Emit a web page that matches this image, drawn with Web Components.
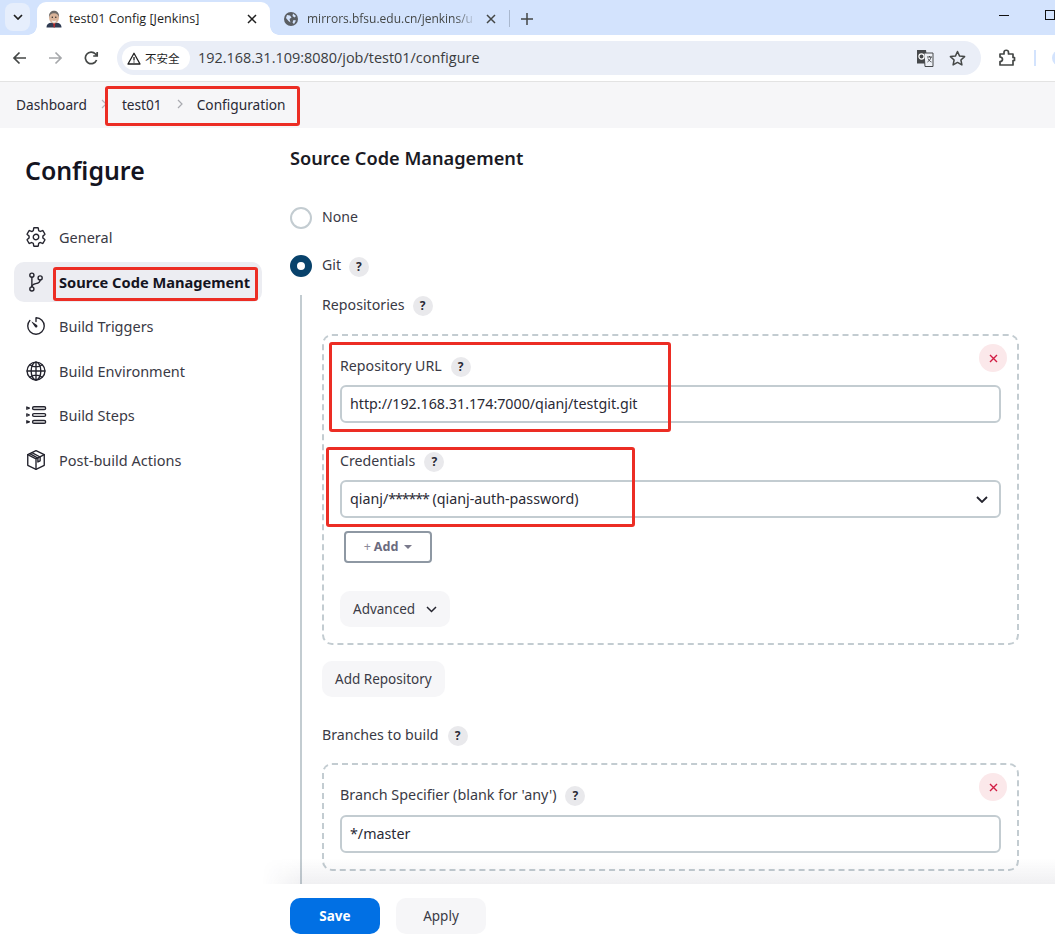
<!DOCTYPE html>
<html lang="en"><head><meta charset="utf-8"><title>test01 Config [Jenkins]</title>
<style>
html,body{margin:0;padding:0;height:944px;overflow:hidden;background:#fff}
body{position:relative;font-family:"Noto Sans","Noto Sans CJK SC",sans-serif;color:#2a2a35;font-size:14px;display:flex;flex-direction:column}
</style></head><body>
<x-tabstrip></x-tabstrip>
<x-toolbar></x-toolbar>
<x-crumbs></x-crumbs>
<x-page>
  <x-sidebar slot="side"></x-sidebar>
  <x-radio>None</x-radio>
  <x-radio checked style="margin-top:24px">Git<x-help></x-help></x-radio>
  <x-nest>
    <x-label style="gap:8px">Repositories</x-label>
    <x-box style="margin-top:19px">
      <x-label>Repository URL</x-label>
      <x-input style="margin-top:9px">http://192.168.31.174:7000/qianj/testgit.git</x-input>
      <x-label style="margin-top:28px">Credentials</x-label>
      <x-input select style="margin-top:9px">qianj/<span style="letter-spacing:-1.100px">******</span> (qianj-auth-password)</x-input>
      <x-addbtn></x-addbtn>
      <x-btn chevron style="margin-top:28px">Advanced</x-btn>
    </x-box>
    <x-btn style="margin-top:16px">Add Repository</x-btn>
    <x-label style="margin-top:28px">Branches to build</x-label>
    <x-box style="margin-top:18px">
      <x-label style="font-size:14.350px">Branch Specifier (blank for 'any')</x-label>
      <x-input style="margin-top:10px">*/master</x-input>
    </x-box>
  </x-nest>
</x-page>
<x-savebar></x-savebar>
<x-mark style="left:105px;top:86px;width:195px;height:40px"></x-mark>
<x-mark style="left:53px;top:267px;width:205px;height:34px"></x-mark>
<x-mark style="left:329px;top:342px;width:342px;height:90px"></x-mark>
<x-mark style="left:326px;top:447px;width:309px;height:80px"></x-mark>
<script>
function def(name, html, init){
  customElements.define(name, class extends HTMLElement{
    connectedCallback(){
      if(this.shadowRoot) return;
      const r=this.attachShadow({mode:'open'});
      r.innerHTML=typeof html==='function'?html(this):html;
    }
  });
}
const FONT='"Noto Sans","Noto Sans CJK SC",sans-serif';
const ion=(inner,size=22)=>`<svg width="${size}" height="${size}" viewBox="0 0 512 512" fill="none" stroke="#24242e" stroke-width="32" stroke-linecap="round" stroke-linejoin="round">${inner}</svg>`;

def('x-tabstrip',`<style>
:host{display:flex;align-items:flex-end;height:35px;background:#d3e3fd;font:12.600px "Open Sans",${FONT};color:#1f1f1f;flex:none;position:relative;overflow:hidden}
.drop{width:25px;height:28px;margin:0 7px 4px 5px;background:#e6eefc;border-radius:8px;display:flex;align-items:center;justify-content:center}
.tab{height:33px;display:flex;align-items:center;box-sizing:border-box}
.a{width:233px;background:#fff;border-radius:9px 9px 0 0;padding-left:9px;position:relative}
.a::before,.a::after{content:"";position:absolute;bottom:0;width:9px;height:9px}
.a::before{left:-9px;background:radial-gradient(circle at 0 0,transparent 8.500px,#fff 9px)}
.a::after{right:-9px;background:radial-gradient(circle at 100% 0,transparent 8.500px,#fff 9px)}
.b{width:233px;padding-left:14px;color:#444746}
.t{margin-left:7px;flex:1;white-space:nowrap;overflow:hidden}
.b .t{-webkit-mask-image:linear-gradient(90deg,#000 88%,transparent);mask-image:linear-gradient(90deg,#000 88%,transparent);margin-left:9px;flex:none;width:169px;font-size:12px}
.x{width:10px;height:10px;margin-right:13px;flex:none}
.sep{width:1px;height:17px;background:#a9b8cf;margin:0 0 8px 0}
.plus{margin:0 0 10px 11px;width:12px;height:12px}
.sp{flex:1}
.min{width:10px;height:1px;background:#111;margin:0 0 19px 0}
.max{width:10px;height:10px;box-sizing:border-box;border:1.500px solid #111;margin:0 0 15px 36px;flex:none}
</style>
<div class="drop"><svg width="10" height="6" viewBox="0 0 10 6" fill="none" stroke="#1f1f1f" stroke-width="1.700"><path d="M1 1l4 4 4-4"/></svg></div>
<div class="tab a"><svg width="16" height="18" viewBox="0 0 16 17" style="flex:none"><path d="M.5 17c0-4 3-5 7.500-5s7.500 1 7.500 5z" fill="#2f3b52"/><path d="M7 12h2.400l-.6 5H7.600z" fill="#b5292c"/><ellipse cx="8" cy="7" rx="5" ry="6" fill="#d9b49a"/><path d="M3 7C2.500 2 5.500.3 8 .3s5.500 1.700 5 6.700c-.5-2.500-2-4.200-5-4.200S3.500 4.500 3 7z" fill="#6d6a68"/><path d="M5.500 9.800c1.500.8 3.500.8 5 0-.4 1.500-1.300 2.400-2.500 2.400S5.900 11.300 5.500 9.800z" fill="#f3ece6"/><circle cx="6.300" cy="6.700" r=".7" fill="#222"/><circle cx="9.800" cy="6.700" r=".7" fill="#222"/></svg>
<span class="t">test01 Config [Jenkins]</span><svg class="x" viewBox="0 0 10 10" stroke="#1f1f1f" stroke-width="1.500"><path d="M1 1l8 8M9 1l-8 8"/></svg></div>
<div class="tab b"><svg width="14" height="14" viewBox="0 0 14 14" style="flex:none"><circle cx="7" cy="7" r="7" fill="#5a5e63"/><path d="M3 3l3 .5 1.500 2-2 1.500 1 3.500-2-1.500L2 6zM9 1.500l3 2.500-1.500 1.500L8.500 4zM9.500 8l2.500.5-2 3.500-1.500-1.500z" fill="#d3e3fd"/></svg>
<span class="t">mirrors.bfsu.edu.cn/jenkins/u</span><svg class="x" style="margin:0 0 0 10px" viewBox="0 0 10 10" stroke="#444746" stroke-width="1.500"><path d="M1 1l8 8M9 1l-8 8"/></svg></div>
<div class="sep" style="margin-left:6px"></div>
<svg class="plus" viewBox="0 0 12 12" stroke="#444746" stroke-width="1.500"><path d="M6 0v12M0 6h12"/></svg>
<div class="sp"></div><div class="min"></div><div class="max"></div>`);

def('x-toolbar',`<style>
:host{display:flex;align-items:center;height:47px;box-sizing:border-box;background:#fff;border-bottom:1px solid #e3e3e3;flex:none;padding:0 0 0 12px;overflow:hidden}
.nav{width:15px;height:14px;flex:none}
.bar{margin-left:18px;flex:none;width:864px;height:34px;border-radius:17px;background:#eaeef7;display:flex;align-items:center;padding:0 5px;box-sizing:border-box}
.chip{height:24px;border-radius:12px;background:#fff;display:flex;align-items:center;padding:0 7px 0 5px;font:11.500px "Noto Sans CJK SC",sans-serif;color:#1f1f1f;gap:4px;width:68px;box-sizing:border-box}
.url{margin-left:8px;font:14.450px "Open Sans",${FONT};color:#3a3c40;flex:1;white-space:nowrap;padding-bottom:2px}
.ic{flex:none}
.sep{width:1.500px;height:16px;background:#d3e3fd;margin-left:18px;flex:none}
.av{width:16px;height:16px;border-radius:50%;background:#d3e3fd;margin-left:16px;flex:none}
</style>
<svg class="nav" viewBox="0 0 15 14" fill="none" stroke="#444746" stroke-width="1.700"><path d="M14 7H2M7.500 1.500L2 7l5.500 5.500"/></svg>
<svg class="nav" style="margin-left:21px" viewBox="0 0 15 14" fill="none" stroke="#a6a8ab" stroke-width="1.700"><path d="M1 7h12M7.500 1.500L13 7l-5.500 5.500"/></svg>
<svg class="nav" style="margin-left:21px" viewBox="0 0 15 14" fill="none" stroke="#444746" stroke-width="1.700"><path d="M12.600 9A5.800 5.800 0 1 1 11.500 3L13 4.700M13.200 1v4h-4"/></svg>
<div class="bar"><div class="chip"><svg width="14" height="13" viewBox="0 0 14 13" fill="none" stroke="#1f1f1f" stroke-width="1.300"><path d="M7 1.200L13 12H1z" stroke-linejoin="round"/><path d="M7 5v3.500M7 9.500v1"/></svg><span>不安全</span></div>
<span class="url">192.168.31.109:8080/job/test01/configure</span>
<svg class="ic" width="18" height="18" viewBox="0 0 18 18"><path d="M1 1h9l1.500 13.500H1z" fill="#46484b"/><path d="M8 4h9v13.500H9z" fill="#eef1f7" stroke="#46484b" stroke-width="1"/><circle cx="5.500" cy="7.500" r="2.600" fill="none" stroke="#fff" stroke-width="1.200"/><path d="M11 8h5M13.500 7v1M15 8c-.5 2.500-2 4-3.500 5M12 9.500c.6 1.500 2 3 3.500 3.500" fill="none" stroke="#46484b" stroke-width="1"/></svg>
<svg class="ic" style="margin:0 10px 0 15px" width="17" height="17" viewBox="0 0 17 17" fill="none" stroke="#444746" stroke-width="1.500" stroke-linejoin="round"><path d="M8.500 1.500l2.100 4.600 5 .5-3.700 3.400 1 4.900-4.400-2.500-4.400 2.500 1-4.900L1.400 6.600l5-.5z"/></svg></div>
<svg class="ic" style="margin-left:17px" width="18" height="18" viewBox="0 0 18 18" fill="none" stroke="#444746" stroke-width="1.700" stroke-linejoin="round"><path d="M2 5h4V3.500a2 2 0 0 1 4.500 0V5H15v3.500h1.500v3H15V16H2v-3.500c2 0 2.500-1 2.500-2S4 8 2 8z"/></svg>
<div class="sep"></div><div class="av"></div>`);

def('x-crumbs',`<style>
:host{display:flex;align-items:center;height:46px;box-sizing:border-box;padding-bottom:2px;background:#f6f6f8;flex:none;padding-left:16px;font:13.700px ${FONT};color:#2a2a35}
.c{width:6px;height:10px;margin:0 15px 0 14px;flex:none}
.c2{margin:0 14px 0 15px}
</style>
<span>Dashboard</span><svg class="c" viewBox="0 0 6 10" fill="none" stroke="#b4b5bb" stroke-width="1.200"><path d="M1 1l4 4-4 4"/></svg>
<span>test01</span><svg class="c c2" viewBox="0 0 6 10" fill="none" stroke="#a9aab0" stroke-width="1.200"><path d="M1 1l4 4-4 4"/></svg>
<span>Configuration</span>`);

def('x-page',`<style>
:host{display:flex;flex:1;min-height:0;overflow:hidden;background:#fff}
.side{width:268px;flex:none}
.main{flex:1;min-width:0;padding:18px 36px 0 22px}
h2{margin:0 0 36px;font:600 18.200px/24px ${FONT};color:#1a1a24}
</style>
<div class="side"><slot name="side"></slot></div>
<div class="main"><h2>Source Code Management</h2><slot></slot></div>`);

const gear='<path d="M262.290 192.310a64 64 0 1057.400 57.400 64.130 64.130 0 00-57.400-57.400zM416.390 256a154.340 154.340 0 01-1.530 20.790l45.210 35.460a10.810 10.810 0 012.450 13.750l-42.770 74a10.810 10.810 0 01-13.140 4.590l-44.900-18.080a16.110 16.110 0 00-15.170 1.750A164.480 164.480 0 01325 400.800a15.940 15.940 0 00-8.820 12.140l-6.730 47.890a11.080 11.080 0 01-10.680 9.170h-85.540a11.110 11.110 0 01-10.690-8.870l-6.720-47.820a16.070 16.070 0 00-9-12.220 155.300 155.300 0 01-21.460-12.570 16 16 0 00-15.110-1.710l-44.890 18.070a10.810 10.810 0 01-13.140-4.580l-42.770-74a10.800 10.800 0 012.450-13.750l38.210-30a16.050 16.050 0 006-14.080c-.36-4.170-.58-8.330-.58-12.500s.21-8.270.58-12.350a16 16 0 00-6.070-13.940l-38.190-30A10.810 10.810 0 0149.48 186l42.770-74a10.810 10.810 0 0113.140-4.590l44.900 18.080a16.110 16.110 0 0015.170-1.750A164.480 164.480 0 01187 111.200a15.940 15.940 0 008.820-12.140l6.730-47.890A11.080 11.080 0 01213.230 42h85.540a11.110 11.110 0 0110.690 8.870l6.720 47.820a16.070 16.070 0 009 12.220 155.300 155.300 0 0121.460 12.570 16 16 0 0015.110 1.710l44.890-18.070a10.810 10.810 0 0113.140 4.580l42.770 74a10.800 10.800 0 01-2.450 13.750l-38.210 30a16.050 16.050 0 00-6.050 14.080c.33 4.140.55 8.300.55 12.470z"/>';
const branch='<circle cx="160" cy="96" r="48"/><circle cx="160" cy="416" r="48"/><path d="M160 368V144"/><circle cx="352" cy="160" r="48"/><path d="M352 208c0 128-192 48-192 160"/>';
const timer='<path d="M112.910 128A191.850 191.850 0 0064 254c-1.180 106.350 85.650 193.800 192 194 106.200.2 192-85.830 192-192 0-104.540-83.550-189.610-187.500-192a4.360 4.360 0 00-4.500 4.370V152"/><path d="M233.380 278.630l-79-113a8.130 8.130 0 0111.320-11.320l113 79a32.500 32.500 0 01-37 53 33.820 33.820 0 01-8.320-8.680z" fill="#24242e" stroke="none"/>';
const globe='<path d="M256 48C141.130 48 48 141.130 48 256s93.130 208 208 208 208-93.130 208-208S370.870 48 256 48z"/><path d="M256 48c-58.070 0-112.670 93.310-112.670 208S197.930 464 256 464s112.670-93.310 112.670-208S314.070 48 256 48z"/><path d="M117.330 117.330c38.240 27.150 86.380 43.340 138.670 43.340s100.430-16.190 138.670-43.340M394.670 394.670c-38.240-27.150-86.380-43.340-138.670-43.340s-100.430 16.190-138.670 43.340M256 48v416M464 256H48"/>';
const steps='<rect x="176" y="64" width="304" height="64" rx="32"/><rect x="176" y="224" width="304" height="64" rx="32"/><rect x="176" y="384" width="304" height="64" rx="32"/><path d="M40 68l64 28-64 28zM40 228l64 28-64 28zM40 388l64 28-64 28z" stroke-width="26"/>';
const cube='<path d="M256 40l192 92v248L256 472 64 380V132z"/><path d="M64 132l192 100 192-100M256 232v240"/><path d="M160 86l192 100v90l-52 26v-92L112 110"/>';

def('x-sidebar',`<style>
:host{display:block;padding:24px 6px 0 14px;font:14.500px ${FONT};color:#3a3a45}
h1{margin:0 0 0 11px;font:600 24.900px/36px ${FONT};color:#14141f}
nav{margin-top:29px;display:flex;flex-direction:column;gap:4.500px}
.i{height:40px;display:flex;align-items:center;gap:12px;padding-left:11px;border-radius:10px}
.i.on{background:#ecedf2;color:#14141f;font-weight:700;font-size:14.650px;margin:0}
svg{flex:none}
</style>
<h1>Configure</h1>
<nav>
<div class="i">${ion(gear)}<span>General</span></div>
<div class="i on">${ion(branch)}<span>Source Code Management</span></div>
<div class="i">${ion(timer)}<span>Build Triggers</span></div>
<div class="i">${ion(globe)}<span>Build Environment</span></div>
<div class="i">${ion(steps)}<span>Build Steps</span></div>
<div class="i">${ion(cube)}<span>Post-build Actions</span></div>
</nav>`);

def('x-help',`<style>
:host{display:inline-flex;width:20px;height:20px;border-radius:50%;background:#e9e9ec;color:#2a2a35;font:700 12px/20px ${FONT};align-items:center;justify-content:center;flex:none}
</style>?`);

def('x-radio',e=>`<style>
:host{display:flex;align-items:center;height:24px;font:14.100px ${FONT};color:#3a3a45}
.r{width:22px;height:22px;border-radius:50%;box-sizing:border-box;flex:none;margin-right:10px;border:2px solid #c3ccd1;background:#fff}
:host([checked]) .r{border:7.500px solid #08426b;background:#fff}
.s{display:flex;align-items:center;gap:8px;margin-top:-3px}
::slotted(x-help){margin-top:4px}
</style><div class="r"></div><div class="s"><slot></slot></div>`);

def('x-nest',`<style>
:host{display:block;margin:17px 0 0 10px;border-left:2px solid #c3ccd1;padding:0 0 60px 20px}
</style><slot></slot>`);

def('x-label',`<style>
:host{display:flex;align-items:center;height:20px;font:14.200px/20px ${FONT};color:#3a3a45;gap:9px}
x-help{margin-top:1px}
</style><span><slot></slot></span><x-help></x-help>`);

def('x-box',`<style>
:host{display:block;position:relative;border:2px dashed #c3ccd1;border-radius:10px;padding:20px 16px 16px}
.del{position:absolute;top:8px;right:10px;width:28px;height:28px;border-radius:50%;background:#fbe8ea;display:flex;align-items:center;justify-content:center}
</style><slot></slot><div class="del"><svg width="9" height="9" viewBox="0 0 9 9" stroke="#d11d44" stroke-width="1.400"><path d="M1 1l7 7M8 1L1 8"/></svg></div>`);

def('x-input',`<style>
:host{display:flex;align-items:center;justify-content:space-between;height:38px;box-sizing:border-box;border:2px solid #c3ccd1;border-radius:6px;padding:0 11px 0 8px;font:14.250px ${FONT};color:#2a2a35;background:#fff}
span{padding-bottom:2px}
svg{display:none}
:host([select]) svg{display:block}
</style><span><slot></slot></span><svg width="12" height="7" viewBox="0 0 12 7" fill="none" stroke="#24242e" stroke-width="1.800"><path d="M1 1l5 5 5-5"/></svg>`);

def('x-addbtn',`<style>
:host{display:flex;align-items:center;justify-content:center;gap:3px;box-sizing:border-box;width:88px;height:32px;margin:13px 0 0 4px;padding-bottom:2px;border:2px solid #8e98a3;border-radius:4px;background:#fff;font:700 12.500px ${FONT};color:#6b6b80}
.p{font-weight:400;color:#8a8a9a}
svg{margin:2px 0 0 3px}
</style><span class="p">+</span><span>Add</span><svg width="8" height="4" viewBox="0 0 8 4" fill="#7a7a8c"><path d="M0 0h8L4 4z"/></svg>`);

def('x-btn',`<style>
:host{display:flex;width:fit-content;align-items:center;gap:11px;height:36px;box-sizing:border-box;padding:0 13px;border-radius:10px;background:#f6f6f8;font:13.500px ${FONT};color:#3a3a45}
svg{display:none}
:host([chevron]) svg{display:block}
</style><span><slot></slot></span><svg width="11" height="7" viewBox="0 0 11 7" fill="none" stroke="#24242e" stroke-width="1.500"><path d="M1 1l4.500 4.500L10 1"/></svg>`);

def('x-savebar',`<style>
:host{position:absolute;left:268px;right:0;top:884px;height:60px;background:#fff;display:flex;gap:16px;padding:14px 0 0 22px;box-sizing:border-box;font:13.500px ${FONT}}
:host::before{content:"";position:absolute;left:-6px;right:0;top:-26px;height:26px;background:linear-gradient(rgba(30,30,60,0),rgba(30,30,60,.065));-webkit-mask-image:linear-gradient(90deg,transparent,#000 40px);mask-image:linear-gradient(90deg,transparent,#000 40px);pointer-events:none}
div{width:90px;height:36px;border-radius:10px;display:flex;align-items:center;justify-content:center}
.s{background:#0170e4;color:#fff;font-weight:700}
.a{background:#f6f6f8;color:#3a3a45}
</style><div class="s">Save</div><div class="a">Apply</div>`);

def('x-mark',`<style>
:host{position:absolute;display:block;box-sizing:border-box;border:3px solid #ec2d24;border-radius:3px;pointer-events:none}
</style>`);
</script>
</body></html>
